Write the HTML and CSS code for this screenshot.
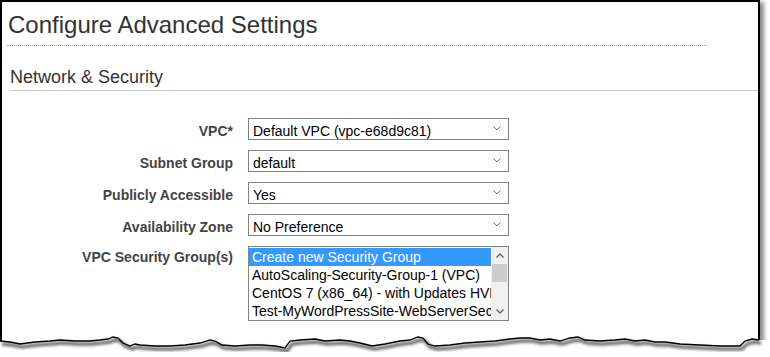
FILE: index.html
```html
<!DOCTYPE html>
<html lang="en">
<head>
    <meta charset="UTF-8">
    <meta name="viewport" content="width=device-width, initial-scale=1.0">
    <title>Configure Advanced Settings</title>
    <link rel="stylesheet" href="styles.css">
</head>
<body>
    <div class="sheet">
        <h1 class="page-title">Configure Advanced Settings</h1>
        <h2 class="section-title">Network &amp; Security</h2>

        <div class="form">
            <label class="field-label">VPC*</label>
            <div class="select">
                <span>Default VPC (vpc-e68d9c81)</span>
                <svg class="chevron" width="8" height="5" viewBox="0 0 8 5"><polyline points="0.5,0.5 4,4 7.5,0.5" fill="none" stroke="#666" stroke-width="1"/></svg>
            </div>

            <label class="field-label">Subnet Group</label>
            <div class="select">
                <span>default</span>
                <svg class="chevron" width="8" height="5" viewBox="0 0 8 5"><polyline points="0.5,0.5 4,4 7.5,0.5" fill="none" stroke="#666" stroke-width="1"/></svg>
            </div>

            <label class="field-label">Publicly Accessible</label>
            <div class="select">
                <span>Yes</span>
                <svg class="chevron" width="8" height="5" viewBox="0 0 8 5"><polyline points="0.5,0.5 4,4 7.5,0.5" fill="none" stroke="#666" stroke-width="1"/></svg>
            </div>

            <label class="field-label">Availability Zone</label>
            <div class="select">
                <span>No Preference</span>
                <svg class="chevron" width="8" height="5" viewBox="0 0 8 5"><polyline points="0.5,0.5 4,4 7.5,0.5" fill="none" stroke="#666" stroke-width="1"/></svg>
            </div>

            <label class="field-label">VPC Security Group(s)</label>
            <div class="listbox">
                <div class="options">
                    <div class="option selected">Create new Security Group</div>
                    <div class="option">AutoScaling-Security-Group-1 (VPC)</div>
                    <div class="option">CentOS 7 (x86_64) - with Updates HVM</div>
                    <div class="option">Test-MyWordPressSite-WebServerSecurityGroup</div>
                </div>
                <div class="scrollbar">
                    <div class="arrow">
                        <svg width="8" height="5" viewBox="0 0 8 5"><polyline points="0.5,4.5 4,1 7.5,4.5" fill="none" stroke="#606060" stroke-width="1.4"/></svg>
                    </div>
                    <div class="thumb"></div>
                    <div class="track"></div>
                    <div class="arrow">
                        <svg width="8" height="5" viewBox="0 0 8 5"><polyline points="0.5,0.5 4,4 7.5,0.5" fill="none" stroke="#606060" stroke-width="1.4"/></svg>
                    </div>
                </div>
            </div>
        </div>

        <!-- torn bottom edge of the screenshot -->
        <svg class="torn" width="770" height="34" viewBox="0 323 770 34">
            <defs>
                <filter id="soft" x="-5%" y="-50%" width="110%" height="200%">
                    <feGaussianBlur stdDeviation="1.4"/>
                </filter>
            </defs>
            <polygon fill="#fff" points="0,341 10,342 20,344 35,342 50,341 60,340 75,341 90,341 100,340 108,339 113,337 118,338 123,343 130,346 135,344 140,345 155,346 170,346 185,345 200,343 210,340 215,341 222,345 235,346 250,345 262,345 275,346 285,348 290,341 300,340 315,339 325,341 340,340 350,341 360,343 372,346 385,344 400,341 410,340 418,337 423,338 428,344 435,346 450,345 465,343 480,342 495,341 510,339 520,338 530,338 540,340 550,339 560,341 570,338 578,337 585,340 600,341 615,340 625,339 635,341 645,340 655,342 665,342 680,344 700,345 720,346 740,346 745,341 752,339 759,340 770,340 770,357 0,357"/>
            <polyline class="torn-shadow" filter="url(#soft)" points="0,341 10,342 20,344 35,342 50,341 60,340 75,341 90,341 100,340 108,339 113,337 118,338 123,343 130,346 135,344 140,345 155,346 170,346 185,345 200,343 210,340 215,341 222,345 235,346 250,345 262,345 275,346 285,348 290,341 300,340 315,339 325,341 340,340 350,341 360,343 372,346 385,344 400,341 410,340 418,337 423,338 428,344 435,346 450,345 465,343 480,342 495,341 510,339 520,338 530,338 540,340 550,339 560,341 570,338 578,337 585,340 600,341 615,340 625,339 635,341 645,340 655,342 665,342 680,344 700,345 720,346 740,346 745,341 752,339 759,340"/>
            <polyline class="torn-line" points="0,341 10,342 20,344 35,342 50,341 60,340 75,341 90,341 100,340 108,339 113,337 118,338 123,343 130,346 135,344 140,345 155,346 170,346 185,345 200,343 210,340 215,341 222,345 235,346 250,345 262,345 275,346 285,348 290,341 300,340 315,339 325,341 340,340 350,341 360,343 372,346 385,344 400,341 410,340 418,337 423,338 428,344 435,346 450,345 465,343 480,342 495,341 510,339 520,338 530,338 540,340 550,339 560,341 570,338 578,337 585,340 600,341 615,340 625,339 635,341 645,340 655,342 665,342 680,344 700,345 720,346 740,346 745,341 752,339 759,340"/>
        </svg>
    </div>
</body>
</html>
```

FILE: styles.css
```css
body {
    margin: 0;
    background-color: #fff;
    font-family: "Liberation Sans", Arial, sans-serif;
    overflow: hidden;
}
.sheet {
    position: relative;
    box-sizing: border-box;
    width: 760px;
    height: 352px;
    border: 2px solid #000;
    border-bottom: none;
    background: #fff;
    box-shadow: 4px 2px 4px rgba(0, 0, 0, 0.45);
}
.page-title {
    width: 699px;
    margin: 9px 0 0 5px;
    padding: 0 0 6px 1px;
    border-bottom: 1px dotted #999;
    font-size: 24px;
    font-weight: normal;
    line-height: 28px;
    color: #333;
}
.section-title {
    margin: 20px 0 0 8px;
    padding-bottom: 2px;
    border-bottom: 1px solid #ccc;
    font-size: 18px;
    font-weight: normal;
    line-height: 22px;
    color: #333;
}
.form {
    display: grid;
    grid-template-columns: 231px 261px;
    column-gap: 15px;
    row-gap: 10px;
    align-items: baseline;
    margin-top: 27px;
}
.field-label {
    text-align: right;
    font-size: 14px;
    font-weight: bold;
    line-height: 16px;
    color: #444;
}
.select {
    box-sizing: border-box;
    height: 22px;
    display: flex;
    justify-content: space-between;
    padding: 5px 7px 0 4px;
    border: 1px solid #828282;
    font-size: 14px;
    line-height: 15px;
    color: #000;
}
.chevron {
    margin-top: 2px;
}
.listbox {
    box-sizing: border-box;
    height: 75px;
    display: flex;
    padding-top: 1px;
    border: 1px solid #828282;
    font-size: 14px;
    line-height: 18px;
    color: #000;
}
.options {
    flex: 1;
    overflow: hidden;
}
.option {
    padding-left: 3px;
    white-space: nowrap;
}
.option.selected {
    background-color: #3399ff;
    color: #fff;
}
.scrollbar {
    width: 17px;
    margin-top: -1px;
    display: flex;
    flex-direction: column;
    background-color: #f0f0f0;
}
.arrow {
    height: 17px;
    display: flex;
    align-items: center;
    justify-content: center;
}
.thumb {
    height: 18px;
    margin: 0 1px;
    background-color: #cdcdcd;
}
.track {
    flex: 1;
}
.torn {
    position: absolute;
    left: -2px;
    top: 321px;
}
.torn-shadow {
    fill: none;
    stroke: #555;
    stroke-width: 3;
    transform: translate(2px, 3px);
}
.torn-line {
    fill: none;
    stroke: #000;
    stroke-width: 1.3;
}
```
